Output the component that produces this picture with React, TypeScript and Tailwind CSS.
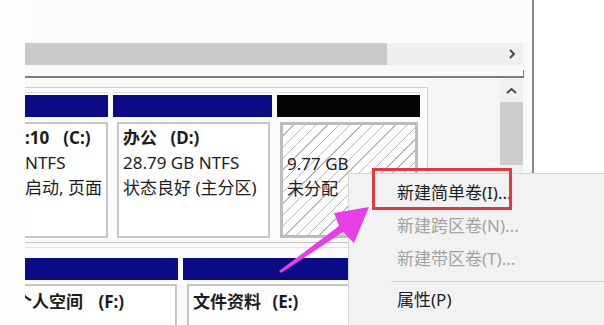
import React from "react";

const hatch =
  "bg-[image:repeating-linear-gradient(135deg,#ffffff_0px,#ffffff_7px,#b9b9b9_7px,#b9b9b9_8px)]";

function Bar({ dark }: { dark?: boolean }) {
  return (
    <div
      className={`h-[22px] ${dark ? "bg-[#050505]" : "bg-[#0b0b86]"}`}
    />
  );
}

function Chevron({ dir }: { dir: "right" | "up" }) {
  return dir === "right" ? (
    <svg width="8" height="10" viewBox="0 0 8 10">
      <polyline points="2,1 6,5 2,9" fill="none" stroke="#4a4a4a" strokeWidth="2" />
    </svg>
  ) : (
    <svg width="11" height="8" viewBox="0 0 11 8">
      <polyline points="1,6 5.5,2 10,6" fill="none" stroke="#4a4a4a" strokeWidth="2" />
    </svg>
  );
}

export default function App() {
  return (
    <div className="relative w-[604px] h-[325px] overflow-hidden bg-white flex font-['Noto_Sans','Noto_Sans_CJK_SC',sans-serif] text-[17px] text-[#1c1c1c]">
      {/* left gutter */}
      <div className="w-[25px] shrink-0 bg-[#fdfdfd]" />

      {/* main pane */}
      <div className="w-[509px] shrink-0 border-r-2 border-[#8a8a8a] bg-[#f9f9f9] flex flex-col">
        <div className="h-[43px] bg-[#fcfcfc]" />

        {/* horizontal scrollbar */}
        <div className="h-[22px] flex">
          <div className="w-[362px] bg-[#c9c9c9]" />
          <div className="w-[136px] bg-[#efefef] flex items-center justify-end pr-[7px]">
            <Chevron dir="right" />
          </div>
        </div>

        <div className="h-[5px]" />
        <div className="w-[499px] h-[8px] border-b-2 border-r border-[#7d7d7d]" />

        {/* lower pane */}
        <div className="flex-1 flex">
          <div className="w-[403px] mt-[9px] border-t border-r border-[#cfcfcf] bg-[#fbfbfb] flex flex-col">
            {/* disk row 1 */}
            <div className="flex gap-[5px] pt-[4px]">
              <div className="w-[83px] border-t border-[#dcdcdc] pt-[2px] flex flex-col">
                <Bar />
                <div className="mt-[5px] h-[116px] border-2 border-l-0 border-[#c6c6c6] bg-white overflow-hidden whitespace-nowrap leading-[25px] pt-[1px]">
                  <div className="font-bold">
                    :10<span className="ml-[14px]">(C:)</span>
                  </div>
                  <div>NTFS</div>
                  <div>启动, 页面</div>
                </div>
              </div>

              <div className="w-[159px] border-t border-[#dcdcdc] pt-[2px] flex flex-col">
                <Bar />
                <div className="mt-[5px] ml-[4px] mr-[2px] h-[116px] border-2 border-[#c6c6c6] bg-white overflow-hidden whitespace-nowrap leading-[25px] pt-[1px] pl-[4px]">
                  <div className="font-bold">
                    办公 <span className="ml-[9px]">(D:)</span>
                  </div>
                  <div>28.79 GB NTFS</div>
                  <div>状态良好 (主分区)</div>
                </div>
              </div>

              <div className="w-[143px] border-t border-[#dcdcdc] pt-[2px] flex flex-col">
                <Bar dark />
                <div
                  className={`mt-[5px] ml-[3px] mr-[2px] h-[116px] border-[3px] border-[#bdbdbd] ${hatch} overflow-hidden whitespace-nowrap leading-[25px] pt-[1px] pl-[4px]`}
                >
                  <div>&nbsp;</div>
                  <div>9.77 GB</div>
                  <div>未分配</div>
                </div>
              </div>
            </div>

            {/* row separator */}
            <div className="mt-[4px] h-px bg-[#c4c4c4]" />
            <div className="mt-[4px] h-px bg-[#e2e2e2]" />
            <div className="h-[10px]" />

            {/* disk row 2 */}
            <div className="flex gap-[5px] flex-1">
              <div className="w-[153px] flex flex-col">
                <Bar />
                <div className="mt-[4px] mr-[1px] flex-1 border-2 border-l-0 border-b-0 border-[#c6c6c6] bg-white overflow-hidden whitespace-nowrap leading-[25px] pt-[3px]">
                  <div className="font-bold -ml-[10px]">
                    个人空间 <span className="ml-[11px]">(F:)</span>
                  </div>
                </div>
              </div>
              <div className="w-[200px] flex flex-col">
                <Bar />
                <div className="mt-[4px] ml-[4px] flex-1 border-2 border-b-0 border-[#c6c6c6] bg-white overflow-hidden whitespace-nowrap leading-[25px] pt-[3px] pl-[4px]">
                  <div className="font-bold">
                    文件资料 <span className="ml-[7px]">(E:)</span>
                  </div>
                </div>
              </div>
            </div>
          </div>

          <div className="w-[72px] bg-[#f6f6f6]" />

          {/* vertical scrollbar */}
          <div className="w-[23px] bg-[#f0f0f0] flex flex-col">
            <div className="h-[24px] flex items-center justify-center pt-[1px]">
              <Chevron dir="up" />
            </div>
            <div className="h-[63px] bg-[#cdcdcd]" />
          </div>
          <div className="w-[9px] bg-[#f9f9f9]" />
        </div>
      </div>

      <div className="flex-1 bg-white" />

      {/* context menu */}
      <div className="absolute left-[348px] top-[173px] right-0 bottom-0 bg-[#f2f2f2] border-l border-t border-[#d6d6d6] flex flex-col pt-[2px] whitespace-nowrap">
        <div className="h-[33px] flex items-center pl-[48px] text-[#1c1c1c]">新建简单卷(I)...</div>
        <div className="h-[33px] flex items-center pl-[48px] text-[#a3a3a3]">新建跨区卷(N)...</div>
        <div className="h-[33px] flex items-center pl-[48px] text-[#a3a3a3]">新建带区卷(T)...</div>
        <div className="mt-[6px] ml-[42px] h-px bg-[#d4d4d4]" />
        <div className="h-[36px] flex items-center pl-[48px] text-[#1c1c1c]">属性(P)</div>
      </div>

      {/* highlight box */}
      <div className="absolute left-[372px] top-[168px] w-[140px] h-[42px] border-[3px] border-[#dd3b43]" />

      {/* pointer arrow */}
      <svg className="absolute left-0 top-0 pointer-events-none" width="604" height="325" viewBox="0 0 604 325">
        <polygon
          points="369,207 334,213 339,226 279,271 281,273 343,232 354,243"
          fill="#e63fe6"
        />
      </svg>
    </div>
  );
}
